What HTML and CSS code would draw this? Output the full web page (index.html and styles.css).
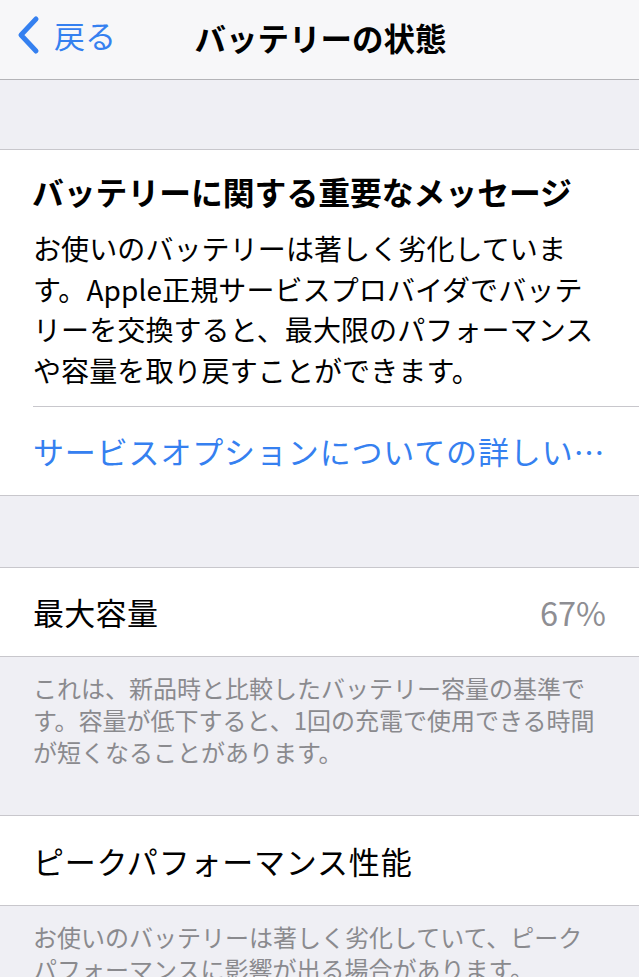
FILE: index.html
```html
<!DOCTYPE html>
<html lang="ja">
<head>
<meta charset="utf-8">
<title>バッテリーの状態</title>
<link rel="stylesheet" href="styles.css">
</head>
<body>
<header class="nav">
  <a class="back" href="#">
    <svg class="chev" width="26" height="40" viewBox="0 0 26 40" aria-hidden="true"><path d="M21 4 L6 20 L21 36" fill="none" stroke="#3580f0" stroke-width="5" stroke-linecap="round" stroke-linejoin="round"/></svg>
    <span class="back-label">戻る</span>
  </a>
  <h1 class="title">バッテリーの状態</h1>
</header>

<div class="spacer spacer-top"></div>

<section class="group">
  <div class="message">
    <h2 class="msg-title">バッテリーに関する重要なメッセージ</h2>
    <p class="msg-body">お使いのバッテリーは著しく劣化していま<br>す。Apple正規サービスプロバイダでバッテ<br>リーを交換すると、最大限のパフォーマンス<br>や容量を取り戻すことができます。</p>
  </div>
  <div class="row row-link">
    <span class="link">サービスオプションについての詳しい…</span>
  </div>
</section>

<div class="spacer spacer-mid"></div>

<section class="group">
  <div class="row">
    <span class="label">最大容量</span>
    <span class="value">67%</span>
  </div>
</section>

<p class="footer footer-1">これは、新品時と比較したバッテリー容量の基準で<br>す。容量が低下すると、1回の充電で使用できる時間<br>が短くなることがあります。</p>

<section class="group">
  <div class="row row-tall">
    <span class="label label-wide">ピークパフォーマンス性能</span>
  </div>
</section>

<p class="footer">お使いのバッテリーは著しく劣化していて、ピーク<br>パフォーマンスに影響が出る場合があります。</p>
</body>
</html>
```

FILE: styles.css
```css
html, body {
  margin: 0;
  padding: 0;
}
body {
  background: #efeff4;
  font-family: "Noto Sans CJK JP", "Noto Sans", sans-serif;
  color: #000;
  width: 639px;
  overflow: hidden;
}
.nav {
  height: 79px;
  background: #f7f7f9;
  border-bottom: 1px solid #b4b4b8;
  display: flex;
  align-items: center;
  justify-content: center;
  position: relative;
}
.back {
  position: absolute;
  left: 15px;
  top: 15px;
  display: flex;
  align-items: center;
  gap: 13px;
  text-decoration: none;
  color: #3580f0;
}
.chev {
  display: block;
}
.back-label {
  font-size: 31px;
  line-height: 40px;
}
.title {
  margin: 0;
  font-size: 31.5px;
  font-weight: 700;
  line-height: 40px;
  margin-top: -6px;
  margin-left: 2px;
}
.spacer-top {
  height: 69px;
}
.spacer-mid {
  height: 71px;
}
.group {
  background: #fff;
  border-top: 1px solid #c8c7cc;
  border-bottom: 1px solid #c8c7cc;
}
.message {
  padding: 20px 20px 16px 33px;
}
.msg-title {
  margin: 0;
  font-size: 31.8px;
  line-height: 42px;
  font-weight: 700;
  margin-left: -1px;
}
.msg-body {
  margin: 16px 0 0;
  font-size: 28px;
  line-height: 40.5px;
  letter-spacing: 0.1px;
}
.row {
  height: 88px;
  margin-left: 33px;
  padding-right: 33px;
  display: flex;
  align-items: center;
  justify-content: space-between;
}
.row-tall {
  height: 89px;
}
.row-link {
  border-top: 1px solid #c8c7cc;
}
.link {
  color: #3580f0;
  font-size: 31px;
  line-height: 40px;
  letter-spacing: 0.85px;
}
.label {
  font-size: 31px;
  line-height: 40px;
  letter-spacing: 0.3px;
}
.label-wide {
  letter-spacing: 0.8px;
}
.value {
  font-size: 32.5px;
  line-height: 40px;
  color: #8e8e93;
}
.footer {
  margin: 0;
  padding: 15px 20px 0 33px;
  font-size: 24px;
  line-height: 32px;
  color: #8a8a8e;
}
.footer-1 {
  height: 96px;
  padding-bottom: 47px;
}
```
